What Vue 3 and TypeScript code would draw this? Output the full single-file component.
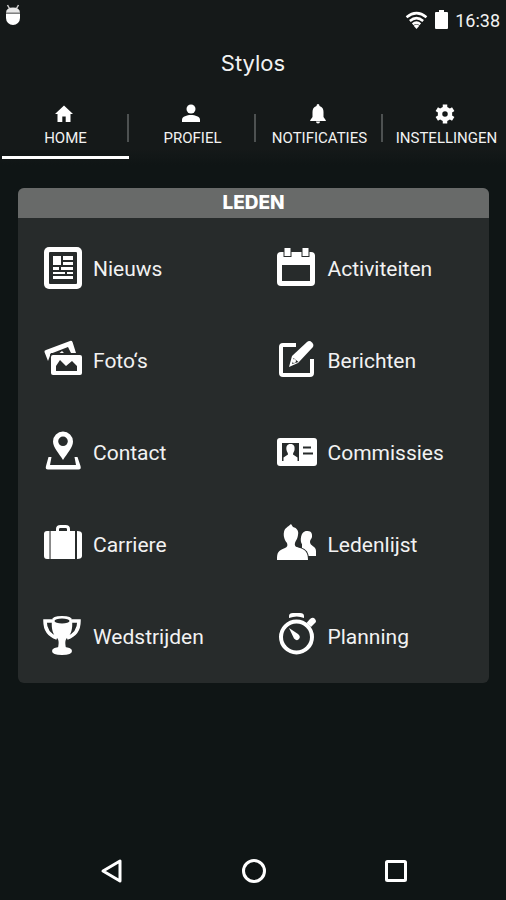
<script setup lang="ts">
import { ref } from 'vue'

interface Tab { id: string; label: string }
interface Item { id: string; label: string }

const tabs: Tab[] = [
  { id: 'home', label: 'HOME' },
  { id: 'profile', label: 'PROFIEL' },
  { id: 'notifications', label: 'NOTIFICATIES' },
  { id: 'settings', label: 'INSTELLINGEN' },
]

const items: Item[] = [
  { id: 'news', label: 'Nieuws' },
  { id: 'activities', label: 'Activiteiten' },
  { id: 'photos', label: 'Foto‘s' },
  { id: 'messages', label: 'Berichten' },
  { id: 'contact', label: 'Contact' },
  { id: 'committees', label: 'Commissies' },
  { id: 'career', label: 'Carriere' },
  { id: 'members', label: 'Ledenlijst' },
  { id: 'matches', label: 'Wedstrijden' },
  { id: 'planning', label: 'Planning' },
]

const active = ref<string>('home')
</script>

<template>
  <div class="screen">
    <header class="top">
      <div class="status">
        <svg class="debug" viewBox="0 0 16 22" aria-hidden="true">
          <path d="M2.500 1 4.500 4.500M13.500 1l-2 3.500" stroke="#ccc" stroke-width="1.500" />
          <path d="M1 9q0-5.500 7-5.500T15 9z" fill="#e8e8e8" />
          <path d="M1 9.500h14V14a7 7 0 0 1-14 0z" fill="#fff" />
          <path d="M1 9h14" stroke="#777" />
        </svg>
        <div class="indicators">
          <svg class="wifi" viewBox="0 0 24 20" aria-hidden="true">
            <g fill="none" stroke="#fff" stroke-width="2.600">
              <path d="M1.500 6.500Q12-2 22.500 6.500" />
              <path d="M5 10.500Q12 4.500 19 10.500" />
              <path d="M8 14Q12 10.500 16 14" />
            </g>
            <path d="M9 15.500q3-2.500 6 0L12 19z" fill="#fff" />
          </svg>
          <svg class="battery" viewBox="0 0 13 20" aria-hidden="true">
            <path d="M4 0h5v2h3q1 0 1 1v15q0 1-1 1H1q-1 0-1-1V3q0-1 1-1h3z" fill="#fff" />
          </svg>
          <time>16:38</time>
        </div>
      </div>
      <h1>Stylos</h1>
      <nav class="tabs" aria-label="Hoofdmenu">
        <button
          v-for="tab in tabs"
          :key="tab.id"
          type="button"
          class="tab"
          :class="{ active: active === tab.id }"
          @click="active = tab.id"
        >
          <svg viewBox="0 0 20 20" aria-hidden="true">
            <path v-if="tab.id === 'home'" d="M10 1.500 1 10h2.500v8h4.800v-5.500h3.400V18h4.800v-8H19z" />
            <g v-else-if="tab.id === 'profile'">
              <circle cx="10" cy="5" r="4.500" />
              <path d="M1 18v-2.500c0-3 5-4.500 9-4.500s9 1.500 9 4.500V18z" />
            </g>
            <path v-else-if="tab.id === 'notifications'" d="M10 0q1.500 0 1.500 2c3 1 4 3 4 6v5l2.300 3.200V17H2.200v-.8L4.500 13V8c0-3 1-5 4-6Q8.500 0 10 0zM8 17.500h4Q12 19.500 10 19.500T8 17.500z" />
            <g v-else>
              <circle cx="10" cy="10" r="5" fill="none" stroke="#fff" stroke-width="4.500" />
              <path d="M10 .5V4M10 16v3.500M1.800 5.200 4.700 7M15.300 13l2.900 1.800M1.800 14.800 4.700 13M15.300 7l2.900-1.800" stroke="#fff" stroke-width="4.500" />
            </g>
          </svg>
          <span>{{ tab.label }}</span>
        </button>
      </nav>
    </header>

    <main>
      <section class="card" aria-labelledby="card-title">
        <h2 id="card-title">LEDEN</h2>
        <div class="grid">
          <button v-for="item in items" :key="item.id" type="button" class="item">
            <svg viewBox="0 0 42 44" aria-hidden="true">
              <g v-if="item.id === 'news'">
                <rect x="3" y="0" width="38" height="42" rx="5" />
                <rect class="hole" x="8" y="5" width="28" height="32" rx="1" />
                <path d="M12 9h8v9h-8zM22 9h10v4H22zM22 15h10v3H22zM12 20h6v3h-6zM20 20h12v3H20zM12 25h12v2H12zM26 25h6v2h-6zM12 29h20v3H12z" />
              </g>
              <g v-else-if="item.id === 'activities'">
                <rect x="1" y="5" width="38" height="34" rx="4" />
                <rect class="hole" x="6" y="18" width="28" height="16" />
                <path class="cut" d="M8.500 1h6v8h-6zM26.500 1h6v8h-6z" />
              </g>
              <g v-else-if="item.id === 'photos'">
                <path d="M5 11 29 2q2-.6 2.600 1.300L35 14H10l-3 8L3.500 13Q3 11.600 5 11z" />
                <path class="hole" d="m9 15 18-7 3 6-6 1-3-3-5 4-6 3z" />
                <rect class="cut" x="10" y="16" width="31" height="20" rx="2" />
                <path class="hole" d="M15 32v-5l4-6 6 6 6-5 5 5v5z" />
              </g>
              <g v-else-if="item.id === 'messages'">
                <path class="line" d="M20 6H7q-2 0-2 2v26q0 2 2 2h27q2 0 2-2V20" />
                <path class="cut" d="m13 28 3-11L31 3q2.500-2 5 .5t.5 5L22 24z" />
                <path class="hole" d="m16 25 1.500-6 5 4z" />
                <circle cx="18" cy="22" r="2" />
              </g>
              <g v-else-if="item.id === 'contact'">
                <path fill-rule="evenodd" d="M22 .5a10 10 0 0 1 10 10c0 6-6 12-10 18.500C18 22.500 12 16.500 12 10.500A10 10 0 0 1 22 .5zm0 5a4.800 4.800 0 1 0 0 9.600 4.800 4.800 0 0 0 0-9.600z" />
                <path d="M7.500 26h3L9 34h26L33.500 26h3l3 9q1 3.500-2 3.500H7q-3 0-2-3.500z" />
              </g>
              <g v-else-if="item.id === 'committees'">
                <rect x="1" y="7" width="40" height="28" rx="3" />
                <rect class="hole" x="6" y="12" width="17" height="18" />
                <path d="M14.500 13c3.500 0 4.500 2.500 4 6-.3 2-1.500 2.500-1.500 4.500l4.500 3v3.500h-14v-3.500l4.500-3c0-2-1.200-2.500-1.500-4.500-.5-3.500.5-6 4-6z" />
                <path d="M27 16.500h8M27 22.500h10" stroke="#272b2b" stroke-width="2" />
              </g>
              <g v-else-if="item.id === 'career'">
                <path d="M8.500 8v28H6q-3 0-3-3V11q0-3 3-3zM10 8h24v28H10zM36 8q5 0 5 3v22q0 3-5 3z" />
                <path d="M9.500 8v28" stroke="#888" />
                <path fill="none" stroke="#fff" stroke-width="3" d="M16.500 9V6q0-2.500 3-2.500h5q3 0 3 2.500v3" />
              </g>
              <g v-else-if="item.id === 'members'">
                <path d="M31 8c4-.5 5.500 2.500 5 6-.3 2-2 2.500-2 5 0 4 6 4 6 9v5H26V21c-2-2-2-13 5-13z" />
                <path class="cut" d="M1 37c0-8 1-9 8-12 2-1 3-2 2-5-2-2-4-7-3-11 .5-4 4-5 7-8l2 3c4 1 6 4 5 8-.5 4-2 5-3 8-1 4 2 4 5 5 6 2 8 5 8 12z" />
              </g>
              <g v-else-if="item.id === 'matches'">
                <path fill="none" stroke="#fff" stroke-width="3.500" d="M11 6H4c0 7 3 14 12 17M31 6h7c0 7-3 14-12 17" />
                <path d="M11 5q0-4 10-4t10 4c1 9-1 15-5 18-2 2-2 5-1 10h-8c1-5 1-8-1-10-4-3-6-9-5-18z" />
                <ellipse class="hole" cx="21" cy="6" rx="7.500" ry="2.500" />
                <path d="M11 36q0-4 10-4t10 4-10 4-10-4z" />
              </g>
              <g v-else>
                <circle class="line" cx="20.500" cy="22" r="15.500" />
                <path d="M13 3V1q0-3 4-3h7q4 0 4 3v2q-7-3-15 0z" />
                <path d="m30.500 8 3.500-4q3-2.500 5 0t0 4l-4 4z" />
                <path d="m13 13 9 6q3 2.500 1 5t-5-.5z" />
              </g>
            </svg>
            <span>{{ item.label }}</span>
          </button>
        </div>
      </section>
    </main>

    <footer class="system">
      <button type="button" aria-label="Terug">
        <svg viewBox="0 0 28 28"><path d="M22 4v20L5 14z" /></svg>
      </button>
      <button type="button" aria-label="Startscherm">
        <svg viewBox="0 0 28 28"><circle cx="14" cy="14" r="10.500" /></svg>
      </button>
      <button type="button" aria-label="Recente apps">
        <svg viewBox="0 0 28 28"><rect x="4.500" y="4.500" width="19" height="19" rx="1" /></svg>
      </button>
    </footer>
  </div>
</template>

<style>
body {
  background: #0f1515;
}
</style>

<style scoped>
.screen {
  display: flex;
  flex-direction: column;
  min-height: 100vh;
  overflow: hidden;
  background: #0f1515;
  color: #f2f2f2;
  font-family: Roboto, "Liberation Sans", sans-serif;
}
button {
  margin: 0;
  padding: 0;
  border: 0;
  background: none;
  color: inherit;
  font: inherit;
  cursor: pointer;
}
svg {
  flex: none;
  fill: #fff;
  overflow: visible;
}
.top {
  background: linear-gradient(#151919 90%, #0f1515);
}
.status {
  display: flex;
  justify-content: space-between;
  align-items: flex-start;
  height: 40px;
  padding: 0 6px 0 5px;
}
.debug {
  width: 16px;
  height: 22px;
  margin-top: 4px;
}
.indicators {
  display: flex;
  align-items: center;
  gap: 7px;
  height: 40px;
  font-size: 18px;
}
.wifi {
  width: 23px;
  height: 19px;
}
.battery {
  width: 13px;
  height: 20px;
}
h1 {
  margin: 0;
  font-family: Inter, Roboto, sans-serif;
  font-size: 22px;
  font-weight: 400;
  line-height: 46px;
  text-align: center;
}
.tabs {
  display: grid;
  grid-template-columns: repeat(4, 1fr);
  margin-right: -4px;
  padding: 18px 0 6px 2px;
}
.tab {
  position: relative;
  display: flex;
  flex-direction: column;
  align-items: center;
  gap: 4px;
  height: 55px;
  border-bottom: 3px solid transparent;
  font-size: 15px;
  line-height: 20px;
  white-space: nowrap;
}
.tab.active {
  border-color: #fff;
}
.tab svg {
  width: 20px;
  height: 20px;
  margin-right: 3px;
}
.tab + .tab::before {
  content: "";
  position: absolute;
  top: 10px;
  left: -2px;
  width: 2px;
  height: 28px;
  background: #4d5151;
}
main {
  flex: 1;
  padding: 23px 17px 0 18px;
}
.card {
  overflow: hidden;
  border-radius: 6px;
  background: #272b2b;
}
h2 {
  margin: 0;
  background: #686a69;
  color: #fff;
  font-family: Inter, Roboto, sans-serif;
  font-size: 19px;
  font-weight: 800;
  line-height: 30px;
  text-align: center;
}
.grid {
  display: grid;
  grid-template-columns: 1fr 1fr;
  grid-auto-rows: 92px;
  padding: 5px 2px 0 0;
}
.item {
  display: flex;
  align-items: center;
  gap: 10px;
  padding-left: 23px;
  font-size: 21px;
}
.item svg {
  width: 42px;
  height: 44px;
}
.hole {
  fill: #272b2b;
}
.cut {
  stroke: #272b2b;
  stroke-width: 2px;
  paint-order: stroke;
}
.line {
  fill: none;
  stroke: #fff;
  stroke-width: 4px;
}
.system {
  display: grid;
  grid-template-columns: repeat(3, 1fr);
  height: 58px;
  padding: 0 39px 0 41px;
}
.system button {
  display: flex;
  align-items: center;
  justify-content: center;
}
.system svg {
  width: 28px;
  height: 28px;
  fill: none;
  stroke: #fff;
  stroke-width: 3px;
  stroke-linejoin: round;
}
</style>
